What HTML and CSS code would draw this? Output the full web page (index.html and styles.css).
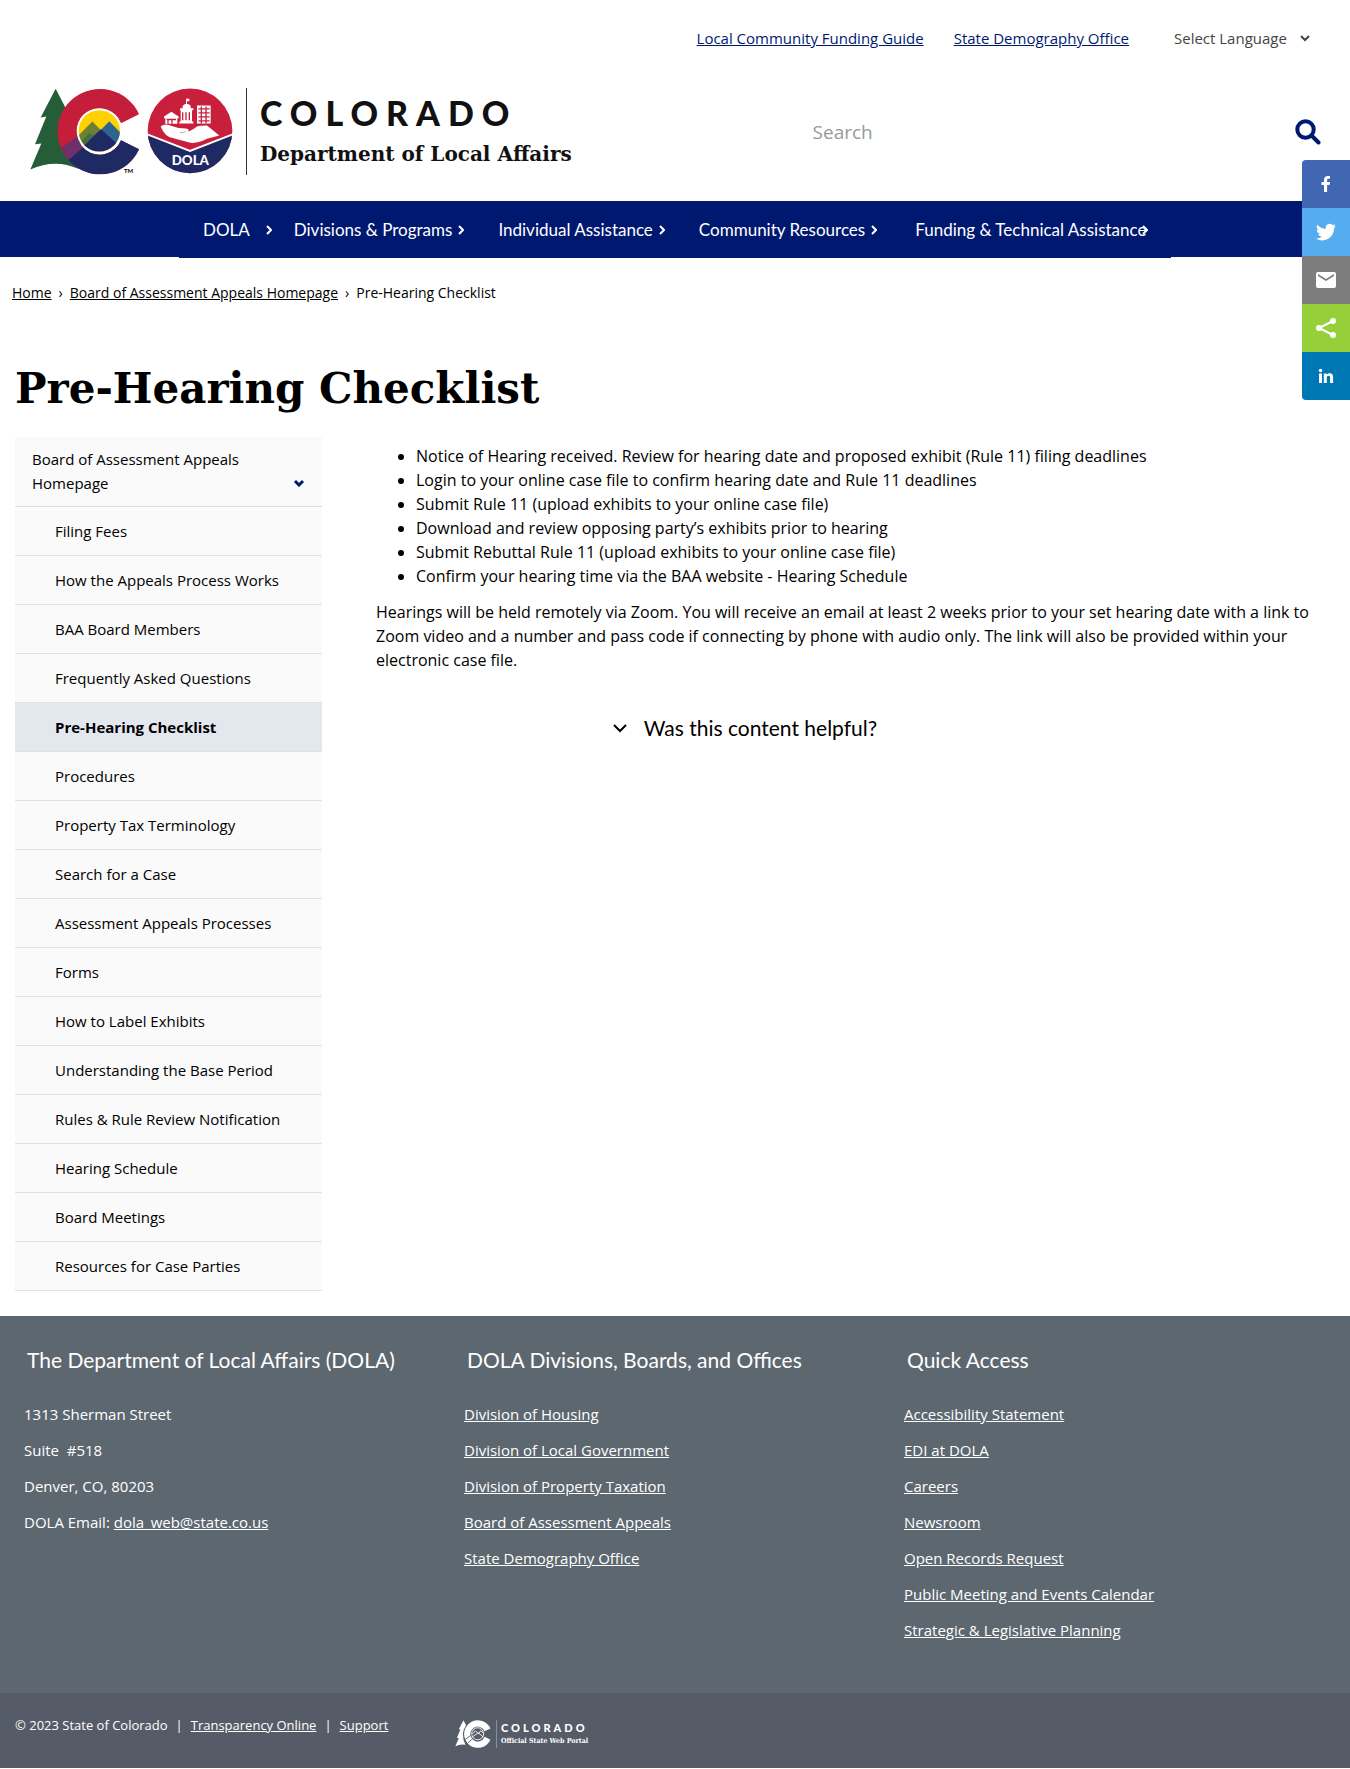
FILE: index.html
```html
<!DOCTYPE html>
<html lang="en">
<head>
<meta charset="utf-8">
<meta name="viewport" content="width=device-width, initial-scale=1">
<title>Pre-Hearing Checklist | Department of Local Affairs</title>
<link rel="stylesheet" href="styles.css">
</head>
<body>
<header>
  <div class="utility">
    <a href="#">Local Community Funding Guide</a>
    <a href="#">State Demography Office</a>
    <div class="language">
      <select aria-label="Select Language"><option>Select Language</option></select>
      <svg viewBox="0 0 10 8" aria-hidden="true"><path d="M1 2l4 4 4-4"/></svg>
    </div>
  </div>
  <div class="masthead">
    <a class="brand" href="#" aria-label="Colorado Department of Local Affairs">
      <svg class="emblem" viewBox="30 22 612 260" aria-hidden="true">
        <defs>
          <clipPath id="ring"><path d="M357 100A128 128 0 1 0 357 205L303 178A69 69 0 1 1 303 127Z"/></clipPath>
          <clipPath id="disc"><circle cx="238" cy="150" r="62"/></clipPath>
          <clipPath id="seal"><circle cx="510" cy="150" r="127"/></clipPath>
        </defs>
        <path fill="#245d38" d="M107 24L62 110L79 107L45 190L64 188L31 266Q105 232 175 264L190 100L138 84Z"/>
        <g clip-path="url(#ring)">
          <path fill="#c41e3a" d="M100 20h270v270H100z"/>
          <path fill="#1f2a65" d="M142 236L240 150L370 150V290H140z"/>
          <path fill="#6f2f6b" d="M122 202L186 157L206 185L145 238z"/>
        </g>
        <circle cx="238" cy="150" r="68" fill="#fff"/>
        <g clip-path="url(#disc)">
          <path fill="#ffd100" d="M170 80h140v140H170z"/>
          <path fill="#6d7f35" d="M160 180L217 122L260 165L220 220z"/>
          <path fill="#2d6491" d="M225 165L268 121L320 175V220z"/>
          <path fill="#1f2a65" d="M160 220L243 145L310 205V220z"/>
          <path fill="#44703f" d="M185 180L208 157L222 165L192 195z"/>
        </g>
        <g clip-path="url(#seal)">
          <path fill="#c8203c" d="M380 20h260v270H380z"/>
          <path fill="#1f2a65" stroke="#fff" stroke-width="6" d="M375 158L510 210L645 158V290H375z"/>
        </g>
        <g fill="#fff">
          <path d="M422 137q12-9 26-4q25 10 50 10q12 2 6 9l-28 2q30 4 55-17q10-3 30-3l37 30l-37 10q-25 14-50 12l-48-13q-28-2-41-36z"/>
          <path d="M432 107l22-14l22 14v5h-4v17h-36v-17h-4zM480 82h8v-7q12-12 24 0v7h8v6h-4v34h4v6h-42v-6h4V88h-2zM498 54h10v7h-7v9h-3z"/>
          <path d="M531 74h41v54h-41z"/>
        </g>
        <path stroke="#c8203c" stroke-width="4" fill="none" d="M440 116h28M444 116v13M456 116v13M488 94v24M498 94v24M508 94v24M535 84h34M535 96h34M535 108h34M535 120h34M544 77v50M558 77v50"/>
        <text class="seal-text" x="511" y="252" text-anchor="middle">DOLA</text>
        <text class="tm-text" x="312" y="276">TM</text>
      </svg>
      <span class="wordmark"><span class="state">COLORADO</span><span class="dept">Department of Local Affairs</span></span>
    </a>
    <form class="search">
      <input type="search" placeholder="Search" aria-label="Search">
      <button type="button" aria-label="Submit search"><svg viewBox="0 0 26 26"><circle cx="10.500" cy="10.500" r="8.200"/><path d="M16.500 16.500l7 7"/></svg></button>
    </form>
  </div>
</header>
<nav class="main-nav" aria-label="Main">
  <ul>
    <li class="short"><a href="#">DOLA</a><svg viewBox="0 0 6 10"><path d="M1 1l4 4-4 4"/></svg></li>
    <li><a href="#">Divisions &amp; Programs</a><svg viewBox="0 0 6 10"><path d="M1 1l4 4-4 4"/></svg></li>
    <li><a href="#">Individual Assistance</a><svg viewBox="0 0 6 10"><path d="M1 1l4 4-4 4"/></svg></li>
    <li><a href="#">Community Resources</a><svg viewBox="0 0 6 10"><path d="M1 1l4 4-4 4"/></svg></li>
    <li class="tight"><a href="#">Funding &amp; Technical Assistance</a><svg viewBox="0 0 6 10"><path d="M1 1l4 4-4 4"/></svg></li>
  </ul>
</nav>
<aside class="share" aria-label="Share">
  <a class="facebook" href="#" aria-label="Facebook"><svg viewBox="0 0 24 24"><path d="M10 20v-7H7.500v-3H10V8c0-2.700 1.500-4 3.800-4 1 0 1.900.1 2.200.1v2.700h-1.500c-1.200 0-1.400.6-1.400 1.400V10H16l-.4 3h-2.500v7z"/></svg></a>
  <a class="twitter" href="#" aria-label="Twitter"><svg viewBox="0 0 24 24"><path d="M22 5.900c-.7.300-1.500.5-2.400.6.900-.5 1.500-1.300 1.800-2.300-.8.500-1.700.8-2.600 1a4.100 4.100 0 0 0-7 3.700C8.400 8.700 5.400 7.100 3.400 4.700a4.100 4.100 0 0 0 1.300 5.500c-.7 0-1.300-.2-1.900-.5 0 2 1.400 3.700 3.300 4.100-.6.200-1.200.2-1.900.1.500 1.600 2 2.800 3.900 2.800A8.300 8.300 0 0 1 2 18.400a11.700 11.700 0 0 0 18-10.400c.8-.6 1.500-1.300 2-2.100z"/></svg></a>
  <a class="email" href="#" aria-label="Email"><svg viewBox="0 0 24 24"><path d="M20 4H4a2 2 0 0 0-2 2v12a2 2 0 0 0 2 2h16a2 2 0 0 0 2-2V6a2 2 0 0 0-2-2zm0 4l-8 5-8-5V6l8 5 8-5z"/></svg></a>
  <a class="sharethis" href="#" aria-label="Share this"><svg viewBox="0 0 24 24"><path fill="none" stroke="#fff" stroke-width="2" d="M19 5L5 12l14 7"/><circle cx="19" cy="5" r="3"/><circle cx="5" cy="12" r="3"/><circle cx="19" cy="19" r="3"/></svg></a>
  <a class="linkedin" href="#" aria-label="LinkedIn"><svg viewBox="0 0 24 24"><path d="M5 9.500h3V19H5zM9.800 9.500h2.900v1.300c.5-.9 1.500-1.500 2.900-1.500 2.900 0 3.500 1.900 3.500 4.400V19h-3v-4.700c0-1.100 0-2.500-1.500-2.500s-1.800 1.200-1.800 2.400V19h-3z"/><circle cx="6.500" cy="6.500" r="1.800"/></svg></a>
</aside>
<nav class="breadcrumb" aria-label="Breadcrumb"><a href="#">Home</a><span>›</span><a href="#">Board of Assessment Appeals Homepage</a><span>›</span>Pre-Hearing Checklist</nav>
<main>
  <h1>Pre-Hearing Checklist</h1>
  <div class="columns">
    <nav class="side-nav" aria-label="Section">
      <div class="section-head"><a href="#">Board of Assessment Appeals Homepage</a><button type="button" aria-label="Toggle section"><svg viewBox="0 0 12 8"><path d="M2 2l4 4 4-4"/></svg></button></div>
      <ul>
        <li><a href="#">Filing Fees</a></li>
        <li><a href="#">How the Appeals Process Works</a></li>
        <li><a href="#">BAA Board Members</a></li>
        <li><a href="#">Frequently Asked Questions</a></li>
        <li class="current"><a href="#" aria-current="page">Pre-Hearing Checklist</a></li>
        <li><a href="#">Procedures</a></li>
        <li><a href="#">Property Tax Terminology</a></li>
        <li><a href="#">Search for a Case</a></li>
        <li><a href="#">Assessment Appeals Processes</a></li>
        <li><a href="#">Forms</a></li>
        <li><a href="#">How to Label Exhibits</a></li>
        <li><a href="#">Understanding the Base Period</a></li>
        <li><a href="#">Rules &amp; Rule Review Notification</a></li>
        <li><a href="#">Hearing Schedule</a></li>
        <li><a href="#">Board Meetings</a></li>
        <li><a href="#">Resources for Case Parties</a></li>
      </ul>
    </nav>
    <article>
      <ul>
        <li>Notice of Hearing received. Review for hearing date and proposed exhibit (Rule 11) filing deadlines</li>
        <li>Login to your online case file to confirm hearing date and Rule 11 deadlines</li>
        <li>Submit Rule 11 (upload exhibits to your online case file)</li>
        <li>Download and review opposing party’s exhibits prior to hearing</li>
        <li>Submit Rebuttal Rule 11 (upload exhibits to your online case file)</li>
        <li>Confirm your hearing time via the BAA website - Hearing Schedule</li>
      </ul>
      <p>Hearings will be held remotely via Zoom. You will receive an email at least 2 weeks prior to your set hearing date with a link to Zoom video and a number and pass code if connecting by phone with audio only. The link will also be provided within your electronic case file.</p>
      <button class="feedback" type="button"><svg viewBox="0 0 16 10"><path d="M2 2l6 6 6-6"/></svg>Was this content helpful?</button>
    </article>
  </div>
</main>
<footer>
  <div class="footer-main">
    <section>
      <h2>The Department of Local Affairs (DOLA)</h2>
      <ul>
        <li>1313 Sherman Street</li>
        <li>Suite&nbsp; #518</li>
        <li>Denver, CO, 80203</li>
        <li>DOLA Email: <a href="#">dola_web@state.co.us</a></li>
      </ul>
    </section>
    <section>
      <h2>DOLA Divisions, Boards, and Offices</h2>
      <ul>
        <li><a href="#">Division of Housing</a></li>
        <li><a href="#">Division of Local Government</a></li>
        <li><a href="#">Division of Property Taxation</a></li>
        <li><a href="#">Board of Assessment Appeals</a></li>
        <li><a href="#">State Demography Office</a></li>
      </ul>
    </section>
    <section>
      <h2>Quick Access</h2>
      <ul>
        <li><a href="#">Accessibility Statement</a></li>
        <li><a href="#">EDI at DOLA</a></li>
        <li><a href="#">Careers</a></li>
        <li><a href="#">Newsroom</a></li>
        <li><a href="#">Open Records Request</a></li>
        <li><a href="#">Public Meeting and Events Calendar</a></li>
        <li><a href="#">Strategic &amp; Legislative Planning</a></li>
      </ul>
    </section>
  </div>
  <div class="footer-bar">
    <p>© 2023 State of Colorado<span>|</span><a href="#">Transparency Online</a><span>|</span><a href="#">Support</a></p>
    <a class="portal" href="#" aria-label="Colorado Official State Web Portal">
      <svg viewBox="30 22 330 260" aria-hidden="true">
        <path fill="#fff" d="M107 24L62 110L79 107L45 190L64 188L31 266Q75 242 125 252Q75 150 130 70Z"/>
        <path fill="#fff" d="M357 100A128 128 0 1 0 357 205L303 178A69 69 0 1 1 303 127Z"/>
        <g fill="none" stroke="#fff" stroke-width="8"><circle cx="238" cy="150" r="56"/><path d="M190 180L243 140L290 180M185 155L217 122L245 150L268 121L290 145"/></g>
        <path fill="none" stroke="#565c67" stroke-width="8" d="M122 202L186 157M145 238L195 192"/>
      </svg>
      <span class="portal-text"><span class="portal-state">COLORADO</span><span class="portal-name">Official State Web Portal</span></span>
    </a>
  </div>
</footer>
</body>
</html>
```
FILE: styles.css
```css
* { box-sizing: border-box; }
body {
  margin: 0;
  position: relative;
  background: #fff;
  color: #000;
  font: 15px/24px "Open Sans", "Noto Sans", sans-serif;
}
ul { list-style: none; margin: 0; padding: 0; }
a { color: inherit; }
button { border: 0; padding: 0; background: none; font: inherit; color: inherit; cursor: pointer; }
svg { display: block; flex: none; }

.utility {
  display: flex;
  justify-content: flex-end;
  align-items: center;
  gap: 30px;
  padding: 26px 40px 0 0;
}
.utility > a { color: #001970; }
.language { display: flex; align-items: center; margin-left: 15px; gap: 13px; color: #444; }
.language select {
  appearance: none;
  border: 0;
  padding: 0;
  background: none;
  color: inherit;
  font: inherit;
}
.language svg { width: 10px; height: 8px; fill: none; stroke: #444; stroke-width: 2; }

.masthead {
  display: grid;
  grid-template-columns: 3fr 2fr;
  align-items: center;
  padding: 38px 29px 26px 30px;
}
.brand { display: flex; color: #111; text-decoration: none; }
.emblem { width: 204px; height: 87px; }
.seal-text { fill: #fff; font: 900 40px Lato, sans-serif; }
.tm-text { font: bold 18px Lato, sans-serif; }
.wordmark {
  display: flex;
  flex-direction: column;
  gap: 4px;
  margin-left: 12px;
  padding-left: 13px;
  border-left: 1px solid #333;
}
.state { font: 900 34px/50px Lato, sans-serif; letter-spacing: 8px; }
.dept { font: bold 20px/24px "DejaVu Serif", serif; white-space: nowrap; }
.search { display: flex; align-items: center; justify-content: space-between; padding-left: 8px; }
.search input {
  flex: 1;
  min-width: 0;
  border: 0;
  padding: 0;
  background: none;
  font: 19px/28px "Open Sans", sans-serif;
}
.search input::placeholder { color: #999; opacity: 1; }
.search svg { width: 26px; height: 26px; fill: none; stroke: #001970; stroke-width: 4; stroke-linecap: round; }

.main-nav { background: #001970; height: 56px; }
.main-nav ul {
  display: flex;
  gap: 34px;
  margin: 0 auto;
  max-width: 992px;
  height: 57px;
  padding-left: 24px;
  background: #001970;
}
.main-nav li { display: flex; align-items: center; gap: 6px; color: #fff; font: 17px/24px Lato, sans-serif; white-space: nowrap; }
.main-nav a { text-decoration: none; }
.main-nav svg { width: 6px; height: 10px; fill: none; stroke: #fff; stroke-width: 2; }
.main-nav .short { gap: 16px; margin-right: -12px; }
.main-nav .tight { gap: 0; margin-left: 4px; }
.main-nav .tight svg { margin-left: -4px; }

.share { position: absolute; top: 160px; right: 0; width: 48px; border-radius: 4px 0 0 4px; overflow: hidden; }
.share a { display: grid; place-items: center; height: 48px; }
.share svg { width: 24px; height: 24px; fill: #fff; }
.facebook { background: #4267b2; }
.twitter { background: #55acee; }
.email { background: #7d7d7d; }
.sharethis { background: #95d03a; }
.linkedin { background: #0077b5; }

.breadcrumb { padding: 24px 12px 0; font-size: 14px; }
.breadcrumb span { margin: 0 7px; }

main { padding: 52px 15px 25px; }
h1 { margin: 0; font: bold 42px/64px "DejaVu Serif", serif; }
.columns { display: grid; grid-template-columns: 307px 1fr; gap: 54px; margin-top: 16px; }
.side-nav { background: #fafafa; }
.section-head { display: flex; align-items: flex-end; justify-content: space-between; padding: 10px 17px 11px; border-bottom: 1px solid #ddd; }
.section-head a { max-width: 220px; text-decoration: none; }
.section-head svg { width: 12px; height: 8px; margin-bottom: 8px; fill: none; stroke: #001970; stroke-width: 3; }
.side-nav li a { display: block; padding: 12px 0 12px 40px; border-bottom: 1px solid #e2e2e2; text-decoration: none; }
.side-nav .current { background: #e3e7ee; font-weight: bold; }
article { padding: 7px 16px 0 0; font-size: 16px; }
article ul { list-style: disc; padding-left: 40px; }
article p { margin: 12px 0 42px; }
.feedback { display: flex; align-items: center; gap: 16px; margin-left: 25%; font: 21px/28px Lato, sans-serif; }
.feedback svg { width: 16px; height: 10px; fill: none; stroke: #000; stroke-width: 2; }

footer { color: #fff; background: #5d6770; }
.footer-main { display: grid; grid-template-columns: repeat(3, 1fr); padding: 30px 15px 43px; }
.footer-main section { padding: 0 9px; }
.footer-main h2 { margin: 0 0 24px 3px; font: 21px/28px Lato, sans-serif; white-space: nowrap; }
.footer-main li { padding: 4px 0 8px; }
.footer-bar {
  display: grid;
  grid-template-columns: 1fr 2fr;
  padding: 20px 15px;
  background: #565c67;
}
.footer-bar p { margin: 0; font-size: 13px; }
.footer-bar span { margin: 0 8px; }
.portal { display: flex; margin-top: 7px; text-decoration: none; }
.portal svg { width: 36px; height: 28px; }
.footer-bar .portal-text { display: flex; flex-direction: column; margin: 0 0 0 5px; padding-left: 4px; border-left: 1px solid #8a9098; }
.footer-bar .portal-text span { margin: 0; }
.portal-state { font: 900 11px/16px Lato, sans-serif; letter-spacing: 3px; }
.portal-name { font: bold 7px/10px "DejaVu Serif Condensed", "DejaVu Serif", serif; }
```
